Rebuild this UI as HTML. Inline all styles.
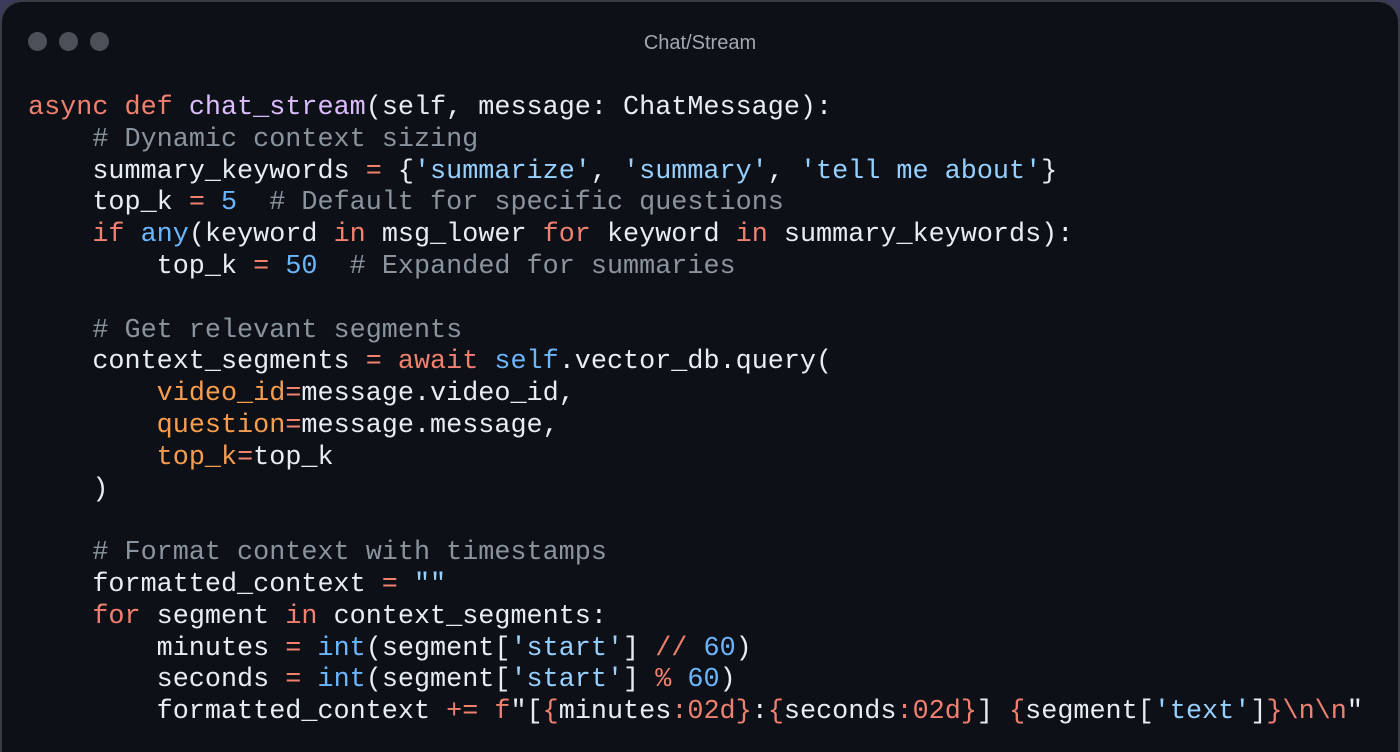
<!DOCTYPE html>
<html><head><meta charset="utf-8"><style>
html,body{margin:0;padding:0;background:#3b3b5c;width:1400px;height:750px;overflow:hidden}
.win{position:absolute;left:0;top:0;width:1396px;height:750px;background:#0d1017;border:2px solid #3a3d46;border-bottom:none;border-radius:22px 22px 0 0}
.dot{position:absolute;top:30px;width:19px;height:19px;border-radius:50%;background:#4c5058}
.title{position:absolute;left:0;right:0;top:30px;text-align:center;font:20px "Liberation Sans",sans-serif;color:#a3a7b0}
pre{position:absolute;left:26px;top:91px;margin:0;font:26.8px/31.8px "Liberation Mono",monospace;color:#e6edf3;white-space:pre}
.k{color:#f0806f}.f{color:#dcbdfb}.s{color:#96d0ff}.n{color:#6cb6ff}.p{color:#f69d50}.c{color:#8b949e}.b{color:#6cb6ff}
</style></head><body>
<div class="win">
<div class="dot" style="left:26px"></div><div class="dot" style="left:57px"></div><div class="dot" style="left:88px"></div>
<div class="title">Chat/Stream</div>
<pre><span class="k">async</span> <span class="k">def</span> <span class="f">chat_stream</span>(self, message: ChatMessage):
    <span class="c"># Dynamic context sizing</span>
    summary_keywords <span class="k">=</span> {<span class="s">'summarize'</span>, <span class="s">'summary'</span>, <span class="s">'tell me about'</span>}
    top_k <span class="k">=</span> <span class="n">5</span>  <span class="c"># Default for specific questions</span>
    <span class="k">if</span> <span class="b">any</span>(keyword <span class="k">in</span> msg_lower <span class="k">for</span> keyword <span class="k">in</span> summary_keywords):
        top_k <span class="k">=</span> <span class="n">50</span>  <span class="c"># Expanded for summaries</span>

    <span class="c"># Get relevant segments</span>
    context_segments <span class="k">=</span> <span class="k">await</span> <span class="b">self</span>.vector_db.query(
        <span class="p">video_id</span><span class="k">=</span>message.video_id,
        <span class="p">question</span><span class="k">=</span>message.message,
        <span class="p">top_k</span><span class="k">=</span>top_k
    )

    <span class="c"># Format context with timestamps</span>
    formatted_context <span class="k">=</span> <span class="s">""</span>
    <span class="k">for</span> segment <span class="k">in</span> context_segments:
        minutes <span class="k">=</span> <span class="b">int</span>(segment[<span class="s">'start'</span>] <span class="k">//</span> <span class="n">60</span>)
        seconds <span class="k">=</span> <span class="b">int</span>(segment[<span class="s">'start'</span>] <span class="k">%</span> <span class="n">60</span>)
        formatted_context <span class="k">+=</span> <span class="k">f</span>"[<span class="k">{</span>minutes<span class="k">:02d}</span>:<span class="k">{</span>seconds<span class="k">:02d}</span>] <span class="k">{</span>segment[<span class="s">'text'</span>]<span class="k">}\n\n</span>"</pre>
</div>
</body></html>
